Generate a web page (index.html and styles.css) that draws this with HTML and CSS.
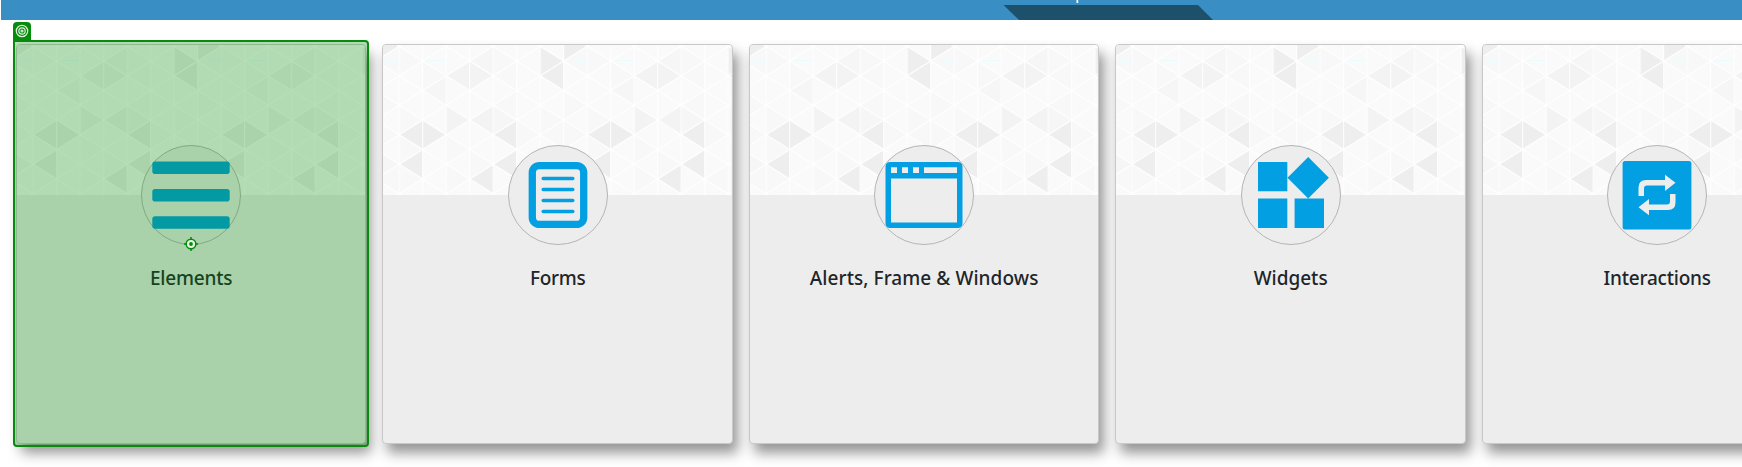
FILE: index.html
```
<!DOCTYPE html>
<html lang="en">
<head>
<meta charset="utf-8">
<title>Categories</title>
<link rel="stylesheet" href="styles.css">
</head>
<body>
<svg class="defs" aria-hidden="true">
  <defs>
    <pattern id="mesh" width="188" height="150" patternUnits="userSpaceOnUse" patternTransform="translate(16.2 0)">
      <rect width="188" height="150" fill="#fafafa"/>
      <path fill="#f8f8f8" d="M0 1.3V30.8L23.5 16ZM0 60.3V89.8L23.5 75ZM0 119.3V148.8L23.5 134ZM23.5 16V45.5L47 30.8ZM0 119.3L23.5 104.5L0 89.8ZM47 89.8V119.3L70.5 104.5ZM70.5 104.5V134L94 119.3ZM94 30.8L117.5 16V45.5ZM94 60.3L117.5 45.5V75ZM117.5 75V104.5L141 89.8ZM141 60.3V89.8L164.5 75ZM141 119.3L164.5 104.5V134ZM164.5 45.5V75L188 60.3ZM164.5 75V104.5L188 89.8ZM164.5 134L188 119.3V148.8ZM47 119.3V148.8L70.5 134ZM94 1.3V30.8L117.5 16ZM164.5 16L188 1.3V30.8ZM141 89.8L164.5 75V104.5ZM117.5 134L141 119.3V148.8Z"/>
      <path fill="#f6f6f6" d="M23.5 45.5L47 30.8V60.3ZM94 60.3V89.8L117.5 75ZM70.5 16L94 1.3V30.8ZM164.5 104.5V134L188 119.3Z"/>
      <path fill="#f3f3f3" d="M47 60.3V89.8L70.5 75ZM70.5 75L94 60.3V89.8ZM70.5 16V45.5L94 30.8ZM47 30.8L70.5 16V45.5Z"/>
      <path fill="#eee" d="M0 89.8L23.5 75V104.5ZM23.5 75V104.5L47 89.8ZM0 119.3L23.5 104.5V134ZM94 89.8L117.5 75V104.5ZM94 119.3L117.5 104.5V134ZM70.5 134L94 119.3V148.8ZM141 1.3V30.8L164.5 16ZM141 30.8L164.5 16V45.5ZM164.5 -13.5V16L188 1.3Z"/>
      <path fill="none" stroke="#fff" d="M0 0V150M23.5 0V150M47 0V150M70.5 0V150M94 0V150M117.5 0V150M141 0V150M164.5 0V150M188 0V150"/>
      <path fill="none" stroke="#fff" stroke-width="1.300" d="M0 -116.7L188 1.3M0 -87.2L188 30.8M0 -57.7L188 60.3M0 -28.2L188 89.8M0 1.3L188 119.3M0 30.8L188 148.8M0 60.3L188 178.3M0 89.8L188 207.8M0 119.3L188 237.3M0 148.8L188 266.8M0 1.3L188 -116.7M0 30.8L188 -87.2M0 60.3L188 -57.7M0 89.8L188 -28.2M0 119.3L188 1.3M0 148.8L188 30.8M0 178.3L188 60.3M0 207.8L188 89.8M0 237.3L188 119.3M0 266.8L188 148.8"/>
      <path stroke="#e8fdfd" d="M28 15.500H46M175 15.500H188"/>
    </pattern>
  </defs>
</svg>

<header class="banner">
  <svg class="banner-art" viewBox="0 0 1741 20" aria-hidden="true">
    <path fill="#1d506b" d="M1002.500 5H1197L1212 20H1018Z"/>
    <path fill="#fff" d="M1075.500 0h1.700v3h-1.700z"/>
  </svg>
</header>

<main class="cards">
  <section class="card">
    <svg class="cover"><rect width="100%" height="100%" fill="url(#mesh)"/></svg>
    <div class="avatar">
      <svg class="icon" viewBox="0 0 100 100"><g fill="#039fe3"><rect x="11.300" y="16.500" width="77.400" height="12.500" rx="2.800"/><rect x="11.300" y="44" width="77.400" height="12.500" rx="2.800"/><rect x="11.300" y="71.300" width="77.400" height="12.500" rx="2.800"/></g></svg>
    </div>
    <h5 class="title elements">Elements</h5>
    <div class="highlight">
      <svg class="badge" viewBox="0 0 18 20"><path fill="#068b0c" d="M0 20V4Q0 0 4 0H14Q18 0 18 4V20Z"/><g fill="none" stroke="#d9f0d9" stroke-width="1.200"><circle cx="9" cy="9" r="5.700"/><circle cx="9" cy="9" r="3.200"/><circle cx="9" cy="9" r="1"/></g></svg>
      <svg class="target" viewBox="0 0 14 14"><circle cx="7" cy="7" r="4.800" fill="#e4f5e4" stroke="#068b0c" stroke-width="1.500"/><circle cx="7" cy="7" r="1.900" fill="#068b0c"/><path stroke="#068b0c" stroke-width="1.500" d="M7 0V3M7 11V14M0 7H3M11 7H14"/></svg>
    </div>
  </section>

  <section class="card">
    <svg class="cover"><rect width="100%" height="100%" fill="url(#mesh)"/></svg>
    <div class="avatar">
      <svg class="icon" viewBox="0 0 100 100"><g fill="none" stroke="#039fe3"><rect x="24.300" y="20.600" width="51.400" height="58.800" rx="7" stroke-width="7.300"/><path stroke-width="3.500" stroke-linecap="round" d="M35.200 33.500H64.800M35.200 44.500H64.800M35.200 55.500H64.800M35.200 66.500H64.800"/></g></svg>
    </div>
    <h5 class="title forms">Forms</h5>
  </section>

  <section class="card">
    <svg class="cover"><rect width="100%" height="100%" fill="url(#mesh)"/></svg>
    <div class="avatar">
      <svg class="icon" viewBox="0 0 100 100"><path fill="#039fe3" fill-rule="evenodd" d="M16.500 17H83.500Q88.500 17 88.500 22V78Q88.500 83 83.500 83H16.500Q11.500 83 11.500 78V22Q11.500 17 16.500 17ZM17 22.300V28H23V22.300ZM28 22.300V28H34V22.300ZM39 22.300V28H45V22.300ZM50 22.300V28H83V22.300ZM17 33.500V77.500H83V33.500Z"/></svg>
    </div>
    <h5 class="title alerts">Alerts, Frame &amp; Windows</h5>
  </section>

  <section class="card">
    <svg class="cover"><rect width="100%" height="100%" fill="url(#mesh)"/></svg>
    <div class="avatar">
      <svg class="icon" viewBox="0 0 100 100"><path fill="#039fe3" d="M17 17H46.300V46.300H17ZM17 53.600H46.300V83H17ZM53.600 53.600H83V83H53.600ZM67.200 12L87.900 32.700L67.200 53.400L46.500 32.700Z"/></svg>
    </div>
    <h5 class="title">Widgets</h5>
  </section>

  <section class="card">
    <svg class="cover"><rect width="100%" height="100%" fill="url(#mesh)"/></svg>
    <div class="avatar">
      <svg class="icon" viewBox="0 0 100 100"><rect x="15.600" y="16" width="68.800" height="68.500" rx="2.500" fill="#039fe3"/><path fill="#ededed" d="M31.500 51V42.500Q31.500 35 39 35H58V29.800L68.500 37.700L58 46V40.500H40Q37 40.500 37 43.500V51ZM68.500 49V57.500Q68.500 65 61 65H42V70.200L31.500 62.300L42 54V59.500H60Q63 59.500 63 56.500V49Z"/></svg>
    </div>
    <h5 class="title interactions">Interactions</h5>
  </section>
</main>
</body>
</html>
```

FILE: styles.css
```
* { box-sizing: border-box; }

body {
  margin: 0;
  height: 467px;
  overflow: hidden;
  background: #fff;
  color: #212529;
  font-family: "Noto Sans", "Open Sans", sans-serif;
}

.defs {
  position: absolute;
  width: 0;
  height: 0;
}

.banner {
  height: 20px;
  margin-left: 1px;
  background: #398ec4;
}

.banner-art {
  display: block;
  width: 1741px;
  height: 20px;
}

.cards {
  display: grid;
  grid-template-columns: repeat(5, 350.5px);
  column-gap: 16px;
  padding: 23.8px 0 0 15.9px;
}

.card {
  position: relative;
  display: flex;
  flex-direction: column;
  align-items: center;
  height: 400px;
  border: 1px solid #c8c8c8;
  border-radius: 4px;
  background: #ededed;
  box-shadow: 5px 9px 13px rgba(0, 0, 0, .42);
}

.cover {
  flex: none;
  width: 100%;
  height: 150px;
  border-radius: 3px 3px 0 0;
}

.avatar {
  position: relative;
  flex: none;
  width: 100px;
  height: 100px;
  margin-top: -50px;
  border: 1px solid #b5b5b5;
  border-radius: 50%;
  background: #ededed;
}

.icon {
  display: block;
  width: 100px;
  height: 100px;
  margin: -1px;
}

.title {
  margin: 21px 0 0;
  font-size: 19px;
  font-weight: 500;
  line-height: 24px;
  white-space: nowrap;
}

.elements,
.interactions { letter-spacing: -.2px; }

.forms { letter-spacing: -.3px; }

.alerts { letter-spacing: .07px; }

/* Selection frame drawn over the picked card */
.highlight {
  position: absolute;
  inset: -5px -4px -4px -4px;
  border: 2px solid #068b0c;
  border-radius: 0 4px 4px 4px;
  background: rgba(3, 141, 8, .29);
}

.badge {
  position: absolute;
  left: -2px;
  top: -20px;
  width: 18px;
  height: 20px;
}

.target {
  position: absolute;
  left: 50%;
  top: calc(50% + 1px);
  width: 14px;
  height: 14px;
  transform: translate(-50%, -50%);
}
```
